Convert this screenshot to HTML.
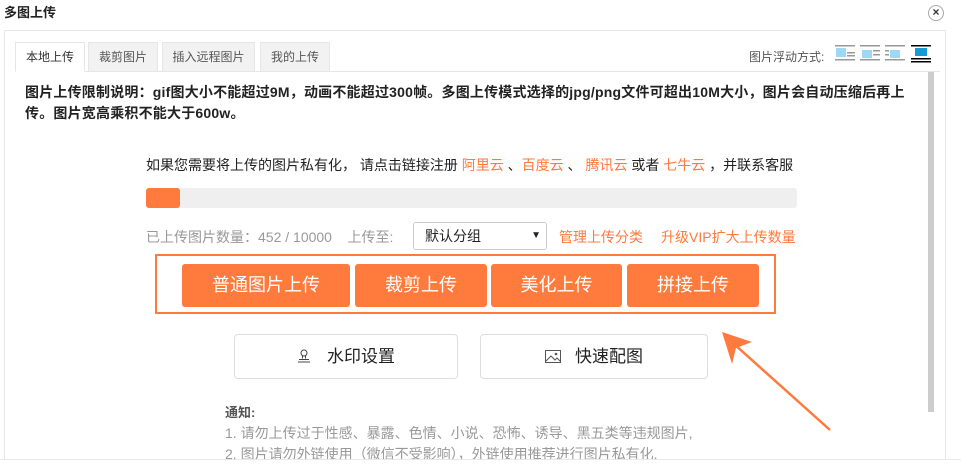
<!DOCTYPE html>
<html><head><meta charset="utf-8"><style>
*{margin:0;padding:0;box-sizing:border-box}
body{width:961px;height:476px;background:#fff;position:relative;overflow:hidden;font-family:"Liberation Sans","Noto Sans CJK SC",sans-serif;color:#333}
.a{position:absolute}
.tab{position:absolute;top:42px;height:30px;border:1px solid #e6e6e6;background:#f2f2f2;font-size:12px;line-height:28px;text-align:center;color:#555}
.ob{position:absolute;top:264px;height:43px;background:#ff7a3d;border-radius:3px;color:#fff;font-size:18px;line-height:43px;text-align:center}
.wb{position:absolute;top:334px;height:45px;border:1px solid #ddd;border-radius:4px;font-size:17px;line-height:43px;text-align:center;color:#222}
.or{color:#ff7a3d}
</style></head><body>
<div class="a" style="left:4px;top:2px;font-size:13px;font-weight:bold;color:#222">多图上传</div>
<div class="a" style="left:928px;top:5px;width:16px;height:16px;border:1px solid #aaa;border-radius:50%;font-size:12px;line-height:13px;text-align:center;font-weight:bold;color:#333">×</div>
<div class="a" style="left:4px;top:30px;width:942px;height:430px;border:1px solid #e8e8e8;border-bottom:none"></div>
<div class="a" style="left:15px;top:71px;width:925px;height:1px;background:#e6e6e6"></div>
<div class="tab" style="left:15px;width:70px;background:#fff;border-bottom-color:#fff;color:#333">本地上传</div>
<div class="tab" style="left:88px;width:70px">裁剪图片</div>
<div class="tab" style="left:162px;width:93px">插入远程图片</div>
<div class="tab" style="left:260px;width:70px">我的上传</div>
<div class="a" style="left:749px;top:48px;font-size:12px;color:#555">图片浮动方式:</div>
<svg class="a" style="left:835px;top:45px" width="100" height="20">
<g fill="#9ed8f5"><rect x="1" y="3" width="10" height="9"/><rect x="27" y="5" width="10" height="8"/><rect x="55" y="5" width="10" height="8"/></g>
<g fill="#999"><rect x="0" y="0" width="20" height="1.5"/><rect x="12" y="7" width="8" height="1.5"/><rect x="12" y="10" width="8" height="1.5"/><rect x="0" y="14" width="20" height="1.5"/>
<rect x="25" y="0" width="20" height="1.5"/><rect x="38" y="5" width="7" height="1.5"/><rect x="38" y="9" width="7" height="1.5"/><rect x="25" y="14" width="20" height="1.5"/>
<rect x="50" y="0" width="20" height="1.5"/><rect x="50" y="5" width="4" height="1.5"/><rect x="50" y="9" width="4" height="1.5"/><rect x="50" y="14" width="20" height="1.5"/></g>
<rect x="76" y="0" width="20" height="1.5" fill="#000"/><rect x="80" y="3" width="12" height="8" fill="#169bd5"/><rect x="76" y="13" width="20" height="1.5" fill="#000"/><rect x="76" y="16" width="20" height="1.5" fill="#000"/>
</svg>
<div class="a" style="left:928px;top:72px;width:6px;height:340px;background:#cdcdcd"></div>
<div class="a" style="left:25px;top:82px;width:892px;font-size:14px;font-weight:bold;line-height:21px;color:#222;letter-spacing:0.2px">图片上传限制说明：gif图大小不能超过9M，动画不能超过300帧。多图上传模式选择的jpg/png文件可超出10M大小，图片会自动压缩后再上传。图片宽高乘积不能大于600w。</div>
<div class="a" style="left:146px;top:155px;font-size:14px;color:#222;white-space:nowrap">如果您需要将上传的图片私有化， 请点击链接注册 <span class="or">阿里云</span> 、<span class="or">百度云</span> 、 <span class="or">腾讯云</span> 或者 <span class="or">七牛云</span> ，并联系客服</div>
<div class="a" style="left:146px;top:188px;width:651px;height:20px;background:#efefef;border-radius:3px"></div>
<div class="a" style="left:146px;top:188px;width:34px;height:20px;background:#ff7a3d;border-radius:3px"></div>
<div class="a" style="left:146px;top:227px;font-size:14px;color:#999;white-space:nowrap">已上传图片数量：452 / 10000 &nbsp;&nbsp; 上传至:</div>
<div class="a" style="left:413px;top:222px;width:134px;height:28px;border:1px solid #ccc;border-radius:3px;font-size:14px;line-height:26px;padding-left:11px;color:#222">默认分组<span style="position:absolute;right:5px;font-size:10px">▼</span></div>
<div class="a or" style="left:559px;top:227px;font-size:14px;white-space:nowrap">管理上传分类</div>
<div class="a or" style="left:661px;top:227px;font-size:14px;white-space:nowrap">升级VIP扩大上传数量</div>
<div class="a" style="left:155px;top:254px;width:621px;height:60px;border:2px solid #ff7a3d"></div>
<div class="ob" style="left:182px;width:168px">普通图片上传</div>
<div class="ob" style="left:355px;width:132px">裁剪上传</div>
<div class="ob" style="left:491px;width:131px">美化上传</div>
<div class="ob" style="left:627px;width:132px">拼接上传</div>
<div class="wb" style="left:234px;width:224px"><svg width="14" height="14" style="margin-right:16px;vertical-align:-1px"><circle cx="7" cy="4" r="3" fill="none" stroke="#444"/><path d="M5.5 7 L5.5 9.5 M8.5 7 L8.5 9.5 M2 10.5 H12 M1 13 H13" stroke="#444" fill="none"/></svg>水印设置</div>
<div class="wb" style="left:480px;width:228px"><svg width="16" height="13" style="margin-right:14px;vertical-align:-1px"><rect x="0.5" y="0.5" width="15" height="12" fill="none" stroke="#555"/><path d="M1 11 L6 6 L10 10 L12 8 L15 11" fill="none" stroke="#555"/><circle cx="11" cy="4" r="1.3" fill="#555"/></svg>快速配图</div>
<div class="a" style="left:225px;top:402px;font-size:13px;font-weight:bold;color:#555">通知:</div>
<div class="a" style="left:225px;top:423px;font-size:14px;color:#999;line-height:21px;white-space:nowrap">1. 请勿上传过于性感、暴露、色情、小说、恐怖、诱导、黑五类等违规图片,<br>2. 图片请勿外链使用（微信不受影响），外链使用推荐进行图片私有化.</div>
<div class="a" style="left:0;top:459px;width:961px;height:17px;background:#fff;border-top:1px solid #e8e8e8"></div>
<svg class="a" style="left:700px;top:320px" width="140" height="120"><line x1="130" y1="110" x2="34" y2="24" stroke="#ff7a3d" stroke-width="2.5"/><path d="M22 12 L52 22 L36 28 L32 44 Z" fill="#ff7a3d"/></svg>
</body></html>
